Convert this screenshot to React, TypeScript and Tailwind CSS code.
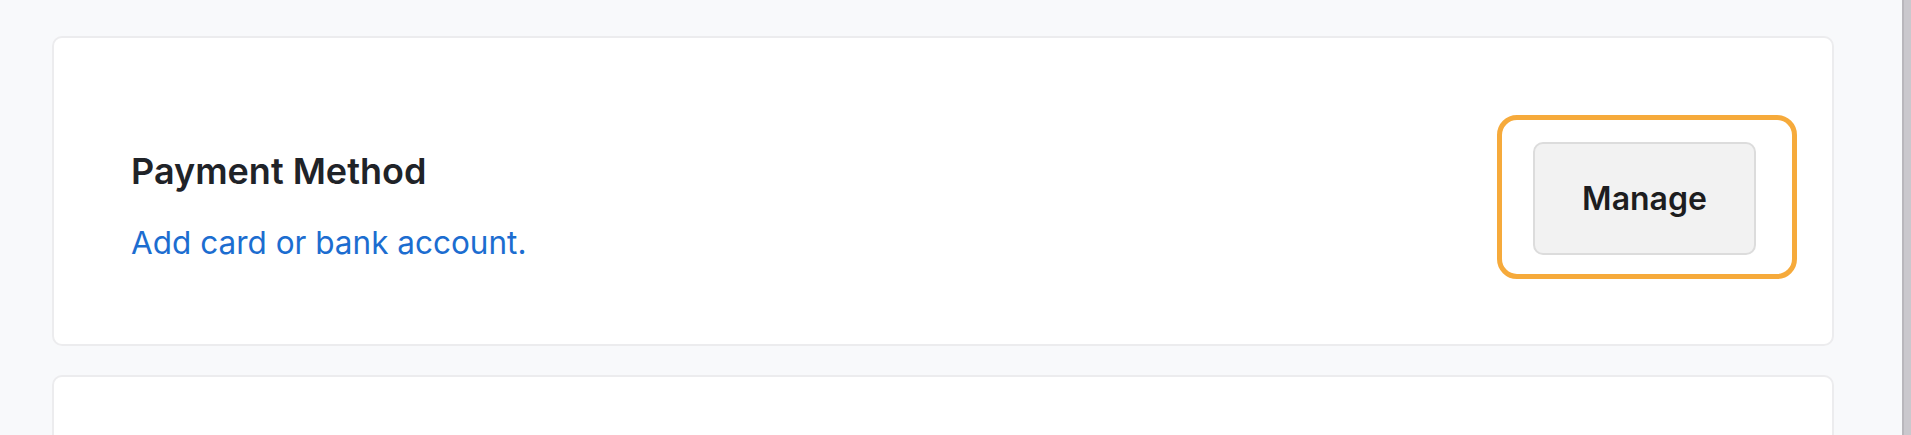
import React from 'react';

const SettingsRow = ({ title, subtitle, action }: { title: string; subtitle: string; action: string }) => (
  <div className="flex shrink-0 items-center justify-between h-[310px] rounded-[10px] border-2 border-[#ececee] bg-white pl-[77px] pr-[35px]">
    <div className="mt-[30px]">
      <div className="text-[36px] leading-[42px] font-semibold text-[#1f2328]">{title}</div>
      <div className="mt-[32px] text-[31.5px] leading-[38px] text-[#1c6dd0]">{subtitle}</div>
    </div>
    <div className="mt-[12px] rounded-[20px] border-[5px] border-[#f6aa3b] pt-[22px] pb-[19px] pl-[31px] pr-[36px]">
      <button className="w-[223px] h-[113px] rounded-[10px] border-2 border-[#dcdcdc] bg-[#f2f2f2] text-[32px] font-semibold text-[#1d1d1f]">
        {action}
      </button>
    </div>
  </div>
);

export default function App() {
  return (
    <div className="flex h-[435px] w-full overflow-hidden bg-[#f8f9fb] font-['Inter',sans-serif]">
      <div className="flex-1 pl-[52px] pr-[68px] pt-[36px] flex flex-col gap-[29px]">
        <SettingsRow title="Payment Method" subtitle="Add card or bank account." action="Manage" />
        <div className="h-[120px] shrink-0 rounded-[10px] border-2 border-[#ececee] bg-white" />
      </div>
      <div className="w-[9px] shrink-0 bg-[#cac8cd] border-l-2 border-[#b9b7bc]" />
    </div>
  );
}
